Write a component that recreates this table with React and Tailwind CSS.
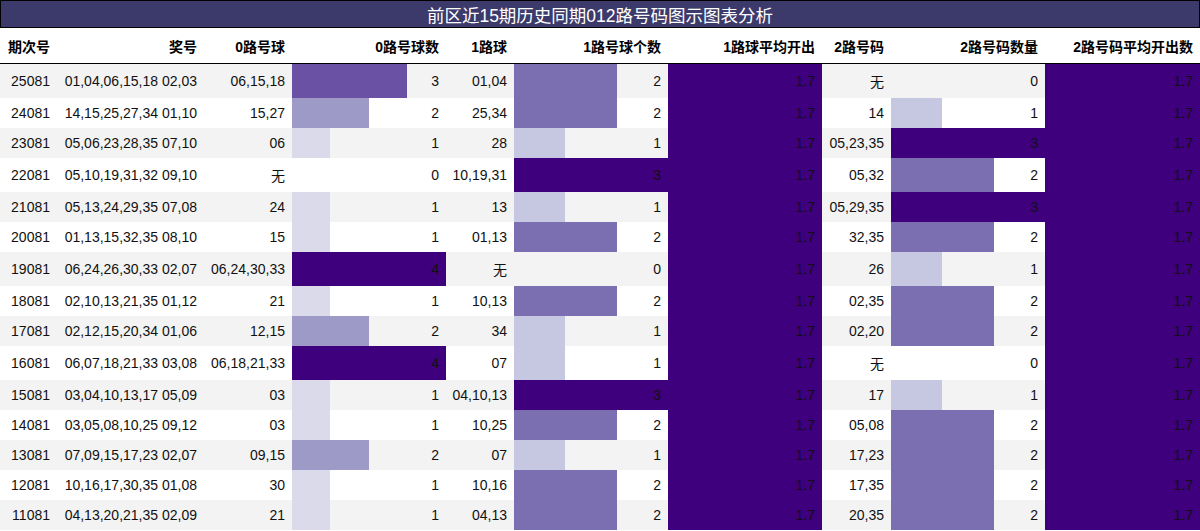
import React from 'react'

const rows = [
  ['25081', '01,04,06,15,18 02,03', '06,15,18', 3, '01,04', 2, '无', 0],
  ['24081', '14,15,25,27,34 01,10', '15,27', 2, '25,34', 2, '14', 1],
  ['23081', '05,06,23,28,35 07,10', '06', 1, '28', 1, '05,23,35', 3],
  ['22081', '05,10,19,31,32 09,10', '无', 0, '10,19,31', 3, '05,32', 2],
  ['21081', '05,13,24,29,35 07,08', '24', 1, '13', 1, '05,29,35', 3],
  ['20081', '01,13,15,32,35 08,10', '15', 1, '01,13', 2, '32,35', 2],
  ['19081', '06,24,26,30,33 02,07', '06,24,30,33', 4, '无', 0, '26', 1],
  ['18081', '02,10,13,21,35 01,12', '21', 1, '10,13', 2, '02,35', 2],
  ['17081', '02,12,15,20,34 01,06', '12,15', 2, '34', 1, '02,20', 2],
  ['16081', '06,07,18,21,33 03,08', '06,18,21,33', 4, '07', 1, '无', 0],
  ['15081', '03,04,10,13,17 05,09', '03', 1, '04,10,13', 3, '17', 1],
  ['14081', '03,05,08,10,25 09,12', '03', 1, '10,25', 2, '05,08', 2],
  ['13081', '07,09,15,17,23 02,07', '09,15', 2, '07', 1, '17,23', 2],
  ['12081', '10,16,17,30,35 01,08', '30', 1, '10,16', 2, '17,35', 2],
  ['11081', '04,13,20,21,35 02,09', '21', 1, '04,13', 2, '20,35', 2],
]

const headers = [
  '期次号', '奖号', '0路号球', '0路号球数', '1路球', '1路号球个数',
  '1路球平均开出', '2路号码', '2路号码数量', '2路号码平均开出数',
]

// purple scale, one for the 0-4 column and one for the 0-3 columns
const scale4 = { 1: '#dadaeb', 2: '#9e9ac8', 3: '#6a51a3', 4: '#3f007d' }
const scale3 = { 1: '#c6c7e1', 2: '#7b6fb1', 3: '#3f007d' }

const grid = 'grid grid-cols-[57px_147px_88px_154px_68px_154px_154px_69px_154px_155px]'

function barStyle(value, max, colors) {
  if (!value) return undefined
  const pct = (value / max) * 100
  const c = colors[value]
  return { background: `linear-gradient(to right, ${c} ${pct}%, transparent ${pct}%)` }
}

function Cell({ children, style, dark }) {
  return (
    <div
      className={`flex items-center justify-end px-[7px] py-[7px] whitespace-nowrap ${dark ? 'bg-[#3f007d]' : ''}`}
      style={style}
    >
      {children}
    </div>
  )
}

export default function App() {
  return (
    <div
      className="w-[1200px] h-[531px] overflow-hidden bg-white text-[14px] leading-[normal] text-[#111]"
      style={{ fontFamily: '"Liberation Sans", "Noto Sans CJK SC", sans-serif' }}
    >
      <div className="h-[28px] border border-black bg-[#3c3a6b] flex items-center justify-center text-white text-[17.5px]">
        前区近15期历史同期012路号码图示图表分析
      </div>

      <div className={`${grid} h-[36px] font-bold text-black border-b border-black`}>
        {headers.map((h) => (
          <Cell key={h}>{h}</Cell>
        ))}
      </div>

      {rows.map((r, i) => (
        <div key={r[0]} className={`${grid} ${i % 2 === 0 ? 'bg-[#f3f3f3]' : 'bg-white'}`}>
          <Cell>{r[0]}</Cell>
          <Cell>{r[1]}</Cell>
          <Cell>{r[2]}</Cell>
          <Cell style={barStyle(r[3], 4, scale4)}>{r[3]}</Cell>
          <Cell>{r[4]}</Cell>
          <Cell style={barStyle(r[5], 3, scale3)}>{r[5]}</Cell>
          <Cell dark>1.7</Cell>
          <Cell>{r[6]}</Cell>
          <Cell style={barStyle(r[7], 3, scale3)}>{r[7]}</Cell>
          <Cell dark>1.7</Cell>
        </div>
      ))}
    </div>
  )
}
